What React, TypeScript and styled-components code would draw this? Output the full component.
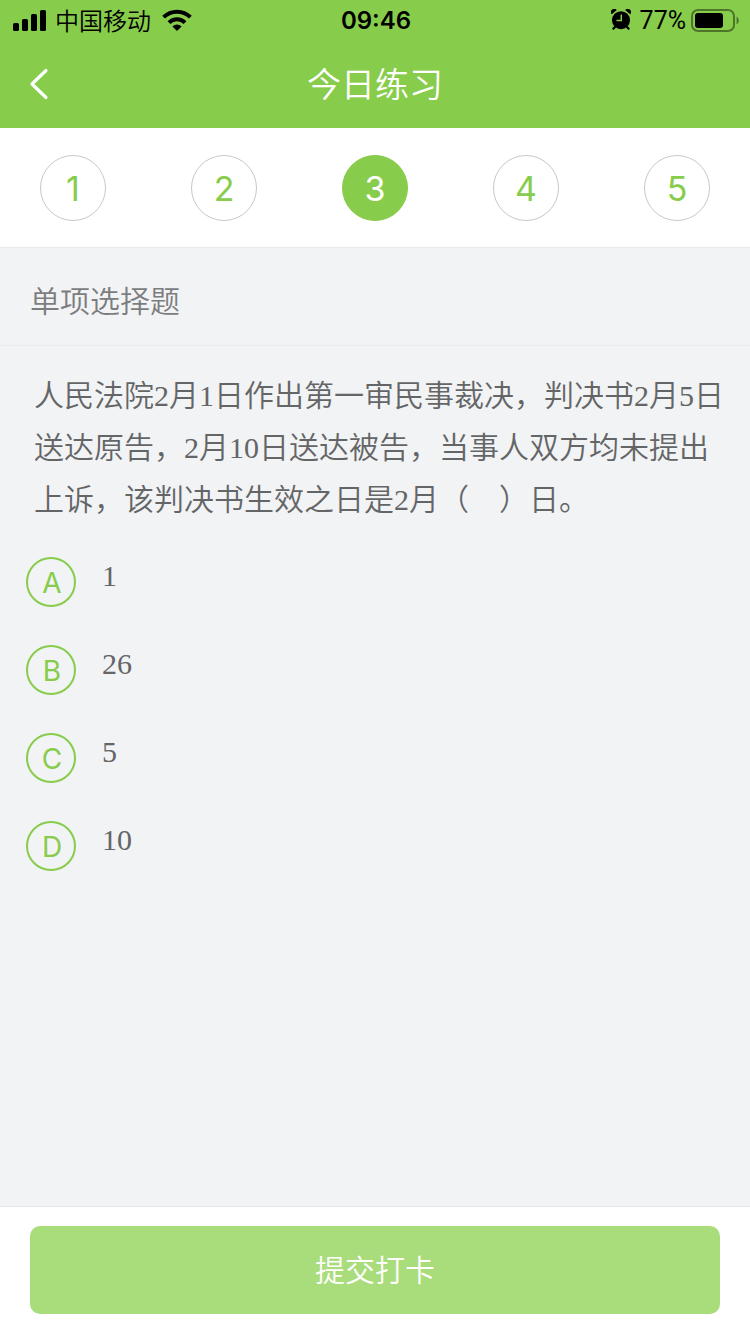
import React, { useState } from "react";
import styled, { createGlobalStyle } from "styled-components";

const GREEN = "#87cc4b";
const SANS = `Inter, "Noto Sans CJK SC", sans-serif`;
const SERIF = `"Liberation Serif", "Noto Sans CJK SC DemiLight", "Noto Sans CJK SC", serif`;
const CJK = `"Noto Sans CJK SC DemiLight", "Noto Sans CJK SC", sans-serif`;

const GlobalStyle = createGlobalStyle`
  * { box-sizing: border-box; }
  body { margin: 0; background: #f2f3f5; font-family: ${SANS}; }
  button { font-family: inherit; padding: 0; border: 0; cursor: pointer; }
`;

const Page = styled.div`
  display: flex;
  flex-direction: column;
  min-height: 100vh;
`;

const Header = styled.header`
  background: ${GREEN};
`;

const StatusBar = styled.div`
  display: grid;
  grid-template-columns: 1fr auto 1fr;
  align-items: center;
  height: 40px;
  padding: 0 11px 0 13px;
  color: #000;
  font-size: 24px;
`;

const StatusGroup = styled.div<{ $end?: boolean }>`
  display: flex;
  align-items: center;
  justify-content: ${(p) => (p.$end ? "flex-end" : "flex-start")};
  gap: ${(p) => (p.$end ? "5px" : "9px")};
`;

const Carrier = styled.span`
  font-family: ${CJK};
  font-weight: 350;
  line-height: 36px;
`;

const Clock = styled.time`
  font-weight: 600;
`;

const Percent = styled.span`
  margin-left: 4px;
  font-family: Roboto, sans-serif;
  font-size: 25px;
`;

const Wifi = styled.svg`
  margin-left: 2px;
`;

const NavBar = styled.div`
  display: grid;
  grid-template-columns: 80px 1fr 80px;
  align-items: center;
  height: 88px;
`;

const BackButton = styled.button`
  display: flex;
  align-items: center;
  height: 88px;
  padding-left: 28px;
  background: transparent;
`;

const Title = styled.h1`
  margin: 0;
  padding-bottom: 2px;
  color: #fff;
  font-family: ${CJK};
  font-size: 34px;
  font-weight: 350;
  line-height: 48px;
  text-align: center;
`;

const Steps = styled.nav`
  display: flex;
  justify-content: space-between;
  padding: 27px 40px 26px;
  background: #fff;
  border-bottom: 1px solid #e9eaeb;
`;

const Step = styled.button<{ $active: boolean }>`
  width: 66px;
  height: 66px;
  border: 1px solid ${(p) => (p.$active ? GREEN : "#c8c8c8")};
  border-radius: 50%;
  background: ${(p) => (p.$active ? GREEN : "#fff")};
  color: ${(p) => (p.$active ? "#fff" : GREEN)};
  font-size: 34px;
`;

const SectionTitle = styled.h2`
  margin: 0;
  padding: 31px 30px 26px;
  border-bottom: 1px solid #e9eaeb;
  color: #7c7d7e;
  font-family: ${CJK};
  font-size: 30px;
  font-weight: 350;
  line-height: 40px;
`;

const Main = styled.main`
  flex: 1;
`;

const Question = styled.fieldset`
  margin: 0;
  padding: 0;
  border: 0;
  color: #646566;
  font-family: ${SERIF};
  font-size: 30px;
`;

const Prompt = styled.legend`
  padding: 24px 26px 31px 34px;
  font-weight: 350;
  line-height: 52px;
`;

const Option = styled.label`
  display: flex;
  align-items: flex-start;
  gap: 26px;
  padding: 0 26px 38px;
  line-height: 38px;
  cursor: pointer;
`;

const HiddenRadio = styled.input`
  position: absolute;
  opacity: 0;
  pointer-events: none;
`;

const Letter = styled.span`
  display: flex;
  align-items: center;
  justify-content: center;
  width: 50px;
  height: 50px;
  padding: 2px 0 0 2px;
  border: 2px solid ${GREEN};
  border-radius: 50%;
  color: ${GREEN};
  font-family: ${SANS};
  font-size: 28px;

  ${HiddenRadio}:checked + & {
    background: ${GREEN};
    color: #fff;
  }
`;

const Footer = styled.footer`
  padding: 19px 30px 20px;
  background: #fff;
  border-top: 1px solid #e6e7e8;
`;

const Submit = styled.button`
  width: 100%;
  height: 88px;
  padding-bottom: 4px;
  border-radius: 10px;
  background: #a9dc7a;
  color: #fff;
  font-family: ${CJK};
  font-size: 30px;
  font-weight: 350;
`;

const prompt =
  "人民法院2月1日作出第一审民事裁决，判决书2月5日送达原告，2月10日送达被告，当事人双方均未提出上诉，该判决书生效之日是2月（\u3000）日。";

const options = [
  { letter: "A", text: "1" },
  { letter: "B", text: "26" },
  { letter: "C", text: "5" },
  { letter: "D", text: "10" },
];

function SignalIcon() {
  return (
    <svg width="33" height="21" viewBox="0 0 33 21" aria-hidden="true">
      <rect x="0" y="13" width="6" height="8" rx="1.6" />
      <rect x="9" y="9" width="6" height="12" rx="1.6" />
      <rect x="18" y="4" width="6" height="17" rx="1.6" />
      <rect x="27" y="0" width="6" height="21" rx="1.6" />
    </svg>
  );
}

function WifiIcon() {
  return (
    <Wifi width="30" height="22" viewBox="0 0 30 22" aria-hidden="true">
      <g fill="none" stroke="#000" strokeWidth="4">
        <path d="M1.6 8.2a19 19 0 0 1 26.8 0" />
        <path d="M7 13.6a11.4 11.4 0 0 1 16 0" />
      </g>
      <path d="M10.4 17.4a6.6 6.6 0 0 1 9.2 0L15 22z" />
    </Wifi>
  );
}

function AlarmIcon() {
  return (
    <svg width="20" height="22" viewBox="0 0 20 22" aria-hidden="true">
      <circle cx="10" cy="11.2" r="9" />
      <path d="M.8 5.2A3.1 3.1 0 0 1 5.8 1zM19.2 5.2A3.1 3.1 0 0 0 14.2 1z" />
      <path d="M4 18 2.4 19.6M16 18l1.6 1.6" stroke="#000" strokeWidth="2.2" strokeLinecap="round" />
      <path d="M10.3 5.4v6H5.5" fill="none" stroke={GREEN} strokeWidth="1.5" />
    </svg>
  );
}

function BatteryIcon() {
  return (
    <svg width="48" height="23" viewBox="0 0 48 23" aria-hidden="true">
      <rect x="1" y="1" width="42" height="21" rx="6" fill="none" stroke="#000" strokeOpacity=".42" strokeWidth="2" />
      <rect x="4" y="4" width="28" height="15" rx="3" />
      <path d="M45.6 7.6q2.2 1.4 2.2 3.9t-2.2 3.9z" fillOpacity=".45" />
    </svg>
  );
}

export default function App() {
  const [current, setCurrent] = useState(3);

  return (
    <Page>
      <GlobalStyle />
      <Header>
        <StatusBar>
          <StatusGroup>
            <SignalIcon />
            <Carrier>中国移动</Carrier>
            <WifiIcon />
          </StatusGroup>
          <Clock>09:46</Clock>
          <StatusGroup $end>
            <AlarmIcon />
            <Percent>77%</Percent>
            <BatteryIcon />
          </StatusGroup>
        </StatusBar>
        <NavBar>
          <BackButton type="button" aria-label="返回">
            <svg width="22" height="32" viewBox="0 0 22 32" fill="none" stroke="#fff" strokeWidth="3.2" strokeLinecap="round" strokeLinejoin="round" aria-hidden="true">
              <path d="M18 2.5 4 16l14 13.5" />
            </svg>
          </BackButton>
          <Title>今日练习</Title>
        </NavBar>
      </Header>
      <Steps>
        {[1, 2, 3, 4, 5].map((n) => (
          <Step key={n} type="button" $active={n === current} onClick={() => setCurrent(n)}>
            {n}
          </Step>
        ))}
      </Steps>
      <Main>
        <SectionTitle>单项选择题</SectionTitle>
        <Question>
          <Prompt>{prompt}</Prompt>
          {options.map((o) => (
            <Option key={o.letter}>
              <HiddenRadio type="radio" name="answer" value={o.letter} />
              <Letter>{o.letter}</Letter>
              <span>{o.text}</span>
            </Option>
          ))}
        </Question>
      </Main>
      <Footer>
        <Submit type="button">提交打卡</Submit>
      </Footer>
    </Page>
  );
}
